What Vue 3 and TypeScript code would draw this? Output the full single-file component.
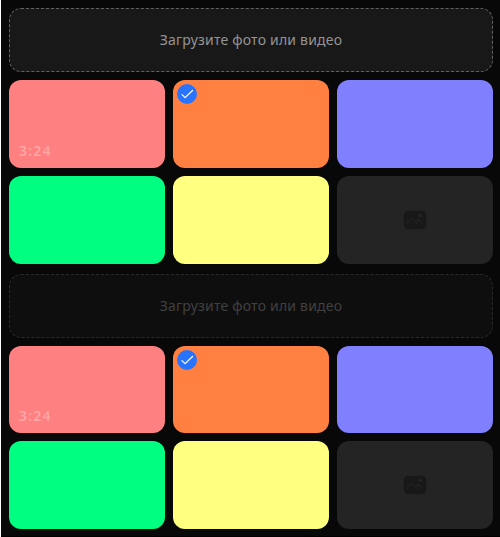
<script setup lang="ts">
interface Tile {
  id: number
  tone: string
  duration?: string
  selected?: boolean
  empty?: boolean
}

const tiles: Tile[] = [
  { id: 1, tone: 'coral', duration: '3:24' },
  { id: 2, tone: 'orange', selected: true },
  { id: 3, tone: 'violet' },
  { id: 4, tone: 'green' },
  { id: 5, tone: 'yellow' },
  { id: 6, tone: 'blank', empty: true },
]

const galleries = [
  { id: 'active', disabled: false },
  { id: 'disabled', disabled: true },
]
</script>

<template>
  <main class="page">
    <section v-for="gallery in galleries" :key="gallery.id" class="gallery">
      <button class="upload" :class="{ disabled: gallery.disabled }" :disabled="gallery.disabled">
        Загрузите фото или видео
      </button>
      <div class="grid">
        <div v-for="tile in tiles" :key="tile.id" class="tile" :class="tile.tone">
          <span v-if="tile.selected" class="check">
            <svg viewBox="0 0 20 20" width="20" height="20" fill="none">
              <path d="M5 10.6 8.1 13.6 15.5 6.5" stroke="#fff" stroke-width="1.2" stroke-linecap="round" stroke-linejoin="round" />
            </svg>
          </span>
          <span v-if="tile.duration" class="duration">{{ tile.duration }}</span>
          <svg v-if="tile.empty" class="picture" viewBox="0 0 24 20" width="24" height="20" fill="none">
            <rect x="0.8" y="0.8" width="22.4" height="18.4" rx="4.5" fill="#181818" />
            <path d="M3.5 13.2 8.7 8.5 14.8 14.4M12.8 12.2 15.8 9.3 19 12.5" stroke="#222" stroke-width="1.2" stroke-linecap="round" stroke-linejoin="round" />
            <circle cx="17.3" cy="5.3" r="1.9" fill="#242424" />
          </svg>
        </div>
      </div>
    </section>
  </main>
</template>

<style>
body {
  background: #fff;
  overflow: hidden;
}
</style>

<style scoped>
.page {
  box-sizing: border-box;
  height: 537px;
  margin-left: 1px;
  padding: 8px 7px 0 8px;
  display: flex;
  flex-direction: column;
  gap: 10px;
  background: #080808;
  border-bottom: 1px solid #000;
  font-family: "Noto Sans", sans-serif;
}

.gallery {
  display: flex;
  flex-direction: column;
  gap: 8px;
}

.upload {
  box-sizing: border-box;
  width: 100%;
  height: 64px;
  padding: 0;
  border: 1px dashed #616161;
  border-radius: 12px;
  background: #181818;
  color: #949494;
  font: 400 14px/20px "Noto Sans", sans-serif;
  letter-spacing: 0.2px;
}

.upload.disabled {
  border-color: #2a2a2a;
  background: #0e0e0e;
  color: #404040;
}

.grid {
  display: grid;
  grid-template-columns: repeat(3, 1fr);
  gap: 8px;
}

.tile {
  position: relative;
  display: flex;
  align-items: center;
  justify-content: center;
  aspect-ratio: 16 / 9;
  border-radius: 12px;
}

.coral { background: #ff8080; }
.orange { background: #ff8040; }
.violet { background: #8080ff; }
.green { background: #00ff80; }
.yellow { background: #ffff80; }
.blank { background: #242424; }

.check {
  position: absolute;
  top: 4px;
  left: 4px;
  width: 20px;
  height: 20px;
  border-radius: 50%;
  background: #2974ff;
}

.check svg,
.picture {
  display: block;
}

.duration {
  position: absolute;
  left: 10px;
  bottom: 7px;
  color: #ffa6a6;
  font: 600 14px/20px "Noto Sans", sans-serif;
  letter-spacing: 1.2px;
}
</style>
